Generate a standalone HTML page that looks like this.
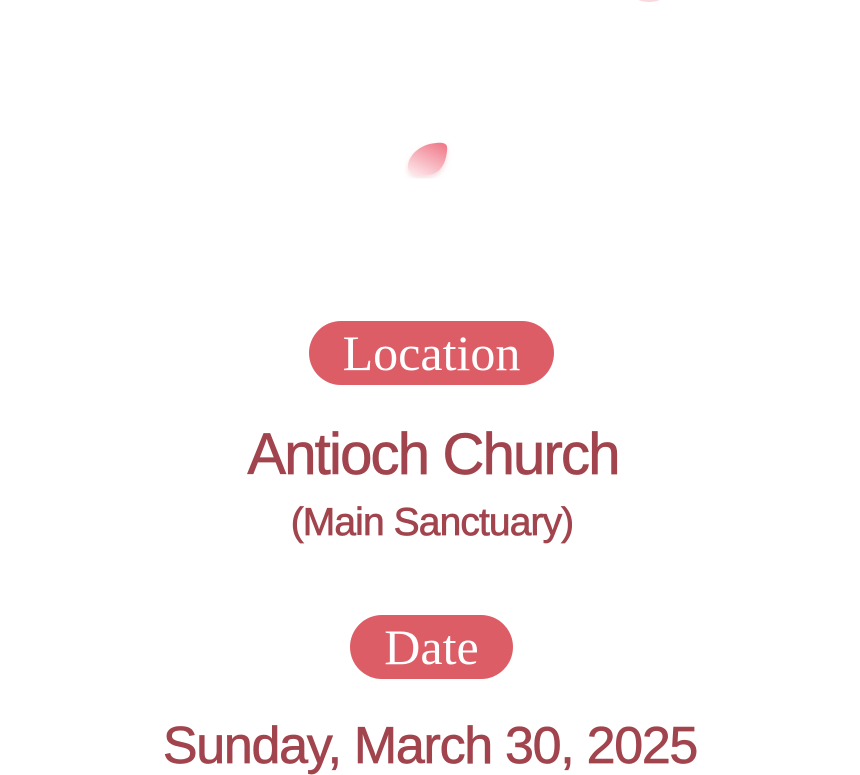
<!DOCTYPE html>
<html><head><style>
html,body{margin:0;padding:0;background:#fff;width:860px;height:775px;overflow:hidden;position:relative}
.pill{position:absolute;background:#dd5d67;border-radius:32px;height:64px;color:#fff;font-family:"Liberation Serif",serif;font-size:50px;line-height:64px;text-align:center}
.t{position:absolute;left:0;width:860px;text-align:center;color:#a1444d;font-family:"Liberation Sans",sans-serif;white-space:nowrap;-webkit-text-stroke:0.7px #a1444d}
</style></head><body>
<svg style="position:absolute;left:398px;top:134px" width="64" height="56" viewBox="0 0 64 56">
<defs><linearGradient id="g" x1="0.8" y1="0" x2="0.2" y2="1"><stop offset="0" stop-color="#f07c8c"/><stop offset="1" stop-color="#fde4e8"/></linearGradient>
<filter id="f"><feDropShadow dx="0" dy="3" stdDeviation="3" flood-color="#e89aa3" flood-opacity="0.35"/></filter></defs>
<path d="M10 34 C9 22 22 10 38 9 C48 8 50 11 49 17 C48 28 43 40 30 41 C20 42 11 40 10 34Z" fill="url(#g)" filter="url(#f)"/>
</svg>
<svg style="position:absolute;left:625px;top:-10px" width="45" height="20"><ellipse cx="24" cy="6" rx="14" ry="6" fill="#f4b3bb" opacity="0.5"/></svg>
<div class="pill" style="left:309px;top:321px;width:245px">Location</div>
<div class="t" style="top:420px;left:3px;font-size:58px;letter-spacing:-1.8px;line-height:70px">Antioch Church</div>
<div class="t" style="top:499px;left:2px;font-size:39px;letter-spacing:-0.9px;line-height:48px">(Main Sanctuary)</div>
<div class="pill" style="left:350px;top:615px;width:163px">Date</div>
<div class="t" style="top:714px;font-size:52px;letter-spacing:-1.3px;line-height:64px">Sunday, March 30, 2025</div>
</body></html>
